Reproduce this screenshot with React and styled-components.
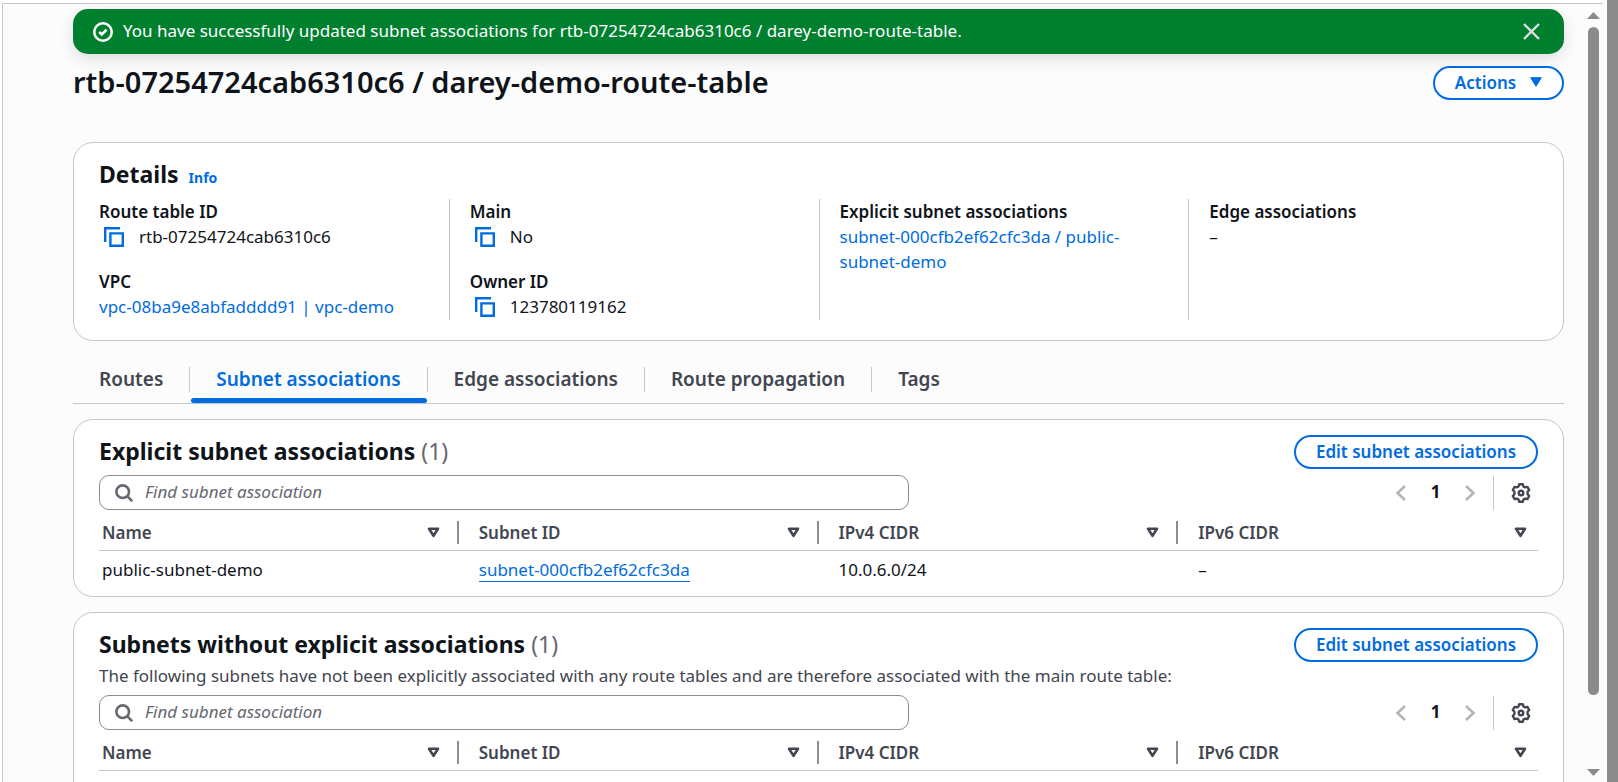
import React from "react";
import styled, { createGlobalStyle } from "styled-components";

const c = {
  text: "#0f141a",
  soft: "#424650",
  muted: "#656871",
  blue: "#006ce0",
  green: "#00802f",
  line: "#c6c6cd",
  edge: "#8c8c94",
  page: "#fcfcfd",
  bar: "#8b8b8b",
};

const Global = createGlobalStyle`
  * { box-sizing: border-box; }
  body {
    margin: 0;
    background: #fff;
    color: ${c.text};
    font: 400 17px/25px "Noto Sans", "Open Sans", sans-serif;
  }
  button, input { font: inherit; color: inherit; }
  h1, h2, p, dl, dd { margin: 0; }
`;

const Shell = styled.div`
  display: flex;
  height: 100vh;
  overflow: hidden;
`;

const Frame = styled.div`
  flex: 1;
  min-width: 0;
  display: flex;
  margin: 3px 4px 0 2px;
  padding-right: 2px;
  background: ${c.page};
  border: solid ${c.line};
  border-width: 1px 0 0 1px;
`;

const Page = styled.main`
  flex: 1;
  min-width: 0;
  padding: 5px 22px 0 70px;
`;

const WindowEdge = styled.div`
  width: 11px;
  background: ${c.bar};
`;

const Scrollbar = styled.div`
  width: 15px;
  display: flex;
  flex-direction: column;
  align-items: center;
  padding: 8px 0 6px;
  gap: 8px;
  svg { display: block; fill: ${c.bar}; }
`;

const Track = styled.div`
  flex: 1;
`;

const Thumb = styled.div`
  width: 11px;
  height: 91%;
  border-radius: 6px;
  background: ${c.bar};
`;

const Banner = styled.div`
  display: flex;
  align-items: center;
  gap: 10px;
  height: 45px;
  padding: 0 24px 0 20px;
  border-radius: 15px;
  background: ${c.green};
  color: #fff;
  box-shadow: 0 5px 15px rgba(0, 7, 22, 0.12);
  p { flex: 1; padding-bottom: 2px; }
  svg { display: block; }
`;

const IconButton = styled.button`
  display: flex;
  align-items: center;
  justify-content: center;
  width: ${(p) => p.$w}px;
  padding: 0;
  border: 0;
  background: none;
  cursor: pointer;
  svg { display: block; }
`;

const Row = styled.div`
  display: flex;
  align-items: center;
  justify-content: space-between;
`;

const TitleRow = styled(Row)`
  height: 34px;
  margin: 12px 0 42px;
`;

const Title = styled.h1`
  font-size: 29px;
  line-height: 34px;
  font-weight: 600;
  padding-bottom: 2px;
`;

const Button = styled.button`
  display: flex;
  align-items: center;
  justify-content: center;
  gap: 14px;
  height: 34px;
  width: ${(p) => p.$w}px;
  padding: 0 0 2px;
  border: 2px solid ${c.blue};
  border-radius: 17px;
  background: #fff;
  color: ${c.blue};
  font-weight: 600;
  white-space: nowrap;
  cursor: pointer;
`;

const Card = styled.section`
  margin-top: 15px;
  padding: 15px 25px ${(p) => p.$bottom || 9}px;
  border: 1px solid ${c.line};
  border-radius: 20px;
  background: #fff;
`;

const CardHeader = styled(Row)`
  align-items: flex-start;
  height: 34px;
`;

const Heading = styled.h2`
  font-size: 23px;
  line-height: 32px;
  font-weight: 700;
  span { font-weight: 400; color: ${c.muted}; }
`;

const DetailsHeading = styled.div`
  display: flex;
  align-items: baseline;
  gap: 10px;
  height: 41px;
`;

const Link = styled.a`
  color: ${c.blue};
  text-decoration: none;
`;

const InfoLink = styled(Link)`
  font-size: 14px;
  font-weight: 700;
`;

const RowLink = styled(Link)`
  border-bottom: 1px solid ${c.blue};
`;

const Columns = styled.dl`
  display: grid;
  grid-template-columns: repeat(4, 1fr);
  gap: 40px;
`;

const Column = styled.div`
  display: flex;
  flex-direction: column;
  gap: 20px;
  padding-bottom: 1px;
  & + & {
    margin-left: -20px;
    padding-left: 20px;
    border-left: 1px solid ${c.line};
  }
  dt { font-weight: 600; }
  dd { min-height: 25px; }
`;

const Copyable = styled.span`
  display: flex;
  align-items: center;
  gap: 15px;
  padding-left: 5px;
`;

const Tabs = styled.nav`
  display: flex;
  margin-top: 16px;
  border-bottom: 1px solid ${c.line};
`;

const Tab = styled.button`
  display: flex;
  flex-direction: column;
  gap: 6px;
  padding: 10px 0 0;
  border: 0;
  background: none;
  color: ${(p) => (p.$active ? c.blue : c.soft)};
  font-size: 19px;
  font-weight: 600;
  cursor: pointer;
  &:not(:last-child) span { border-right: 1px solid ${c.line}; }
  span { padding: 0 26px; line-height: 25px; }
  &::after {
    content: "";
    align-self: stretch;
    height: 5px;
    margin: 0 1px;
    border-radius: 3px;
    background: ${(p) => (p.$active ? c.blue : "transparent")};
  }
`;

const Description = styled.p`
  padding: 1px 0;
  color: ${c.soft};
`;

const Tools = styled(Row)`
  margin-top: 6px;
`;

const Search = styled.label`
  display: flex;
  align-items: center;
  gap: 12px;
  flex: 0 1 810px;
  height: 35px;
  padding: 0 15px;
  border: 1px solid ${c.edge};
  border-radius: 10px;
  background: #fff;
  svg { display: block; flex: none; }
  input {
    flex: 1;
    min-width: 0;
    padding: 0 0 2px;
    border: 0;
    outline: 0;
    background: none;
  }
  input::placeholder { color: ${c.muted}; font-style: italic; opacity: 1; }
`;

const Pager = styled.div`
  display: flex;
  align-items: center;
  height: 35px;
  padding-right: 7px;
  gap: 17px;
`;

const PageNumber = styled.span`
  width: 59px;
  padding-bottom: 2px;
  text-align: center;
  font-weight: 700;
`;

const Pages = styled.div`
  display: flex;
  align-items: center;
`;

const Rule = styled.div`
  width: 1px;
  height: 34px;
  background: ${c.line};
`;

const Table = styled.table`
  width: 100%;
  table-layout: fixed;
  border-collapse: collapse;
  text-align: left;
  th {
    padding: 11px 0 6px;
    border-bottom: 1px solid ${c.line};
    color: ${c.soft};
    font-weight: 600;
  }
  td { padding: 6px 0 5px 20px; }
  td:first-child { padding-left: 3px; }
`;

const HeaderCell = styled.div`
  display: flex;
  align-items: center;
  justify-content: space-between;
  height: 23px;
  padding: 0 ${(p) => (p.$last ? 9 : 17)}px 0 ${(p) => (p.$first ? 3 : 20)}px;
  border-right: 2px solid ${(p) => (p.$last ? "transparent" : c.edge)};
`;

const CopyIcon = () => (
  <svg width="20" height="20" viewBox="0 0 20 20" fill="none" stroke={c.blue} strokeWidth="2.4">
    <path d="M1.2 15V1.2H16" />
    <path d="M6.4 6.4h12.4v12.4H6.4z" />
  </svg>
);
const CheckIcon = () => (
  <svg width="20" height="20" viewBox="0 0 16 16" fill="none" stroke="#fff" strokeWidth="2">
    <circle cx="8" cy="8" r="7" />
    <path d="m5 8 2 2 3.9-3.8" />
  </svg>
);
const CloseIcon = () => (
  <svg width="17" height="17" viewBox="0 0 17 17" fill="none" stroke="#dedee3" strokeWidth="2.4">
    <path d="m1 1 15 15M16 1 1 16" />
  </svg>
);
const SearchIcon = () => (
  <svg width="18" height="18" viewBox="0 0 18 18" fill="none" stroke={c.muted} strokeWidth="2.6">
    <circle cx="7.7" cy="7.7" r="6.3" />
    <path d="m12.2 12.2 5 5" />
  </svg>
);
const CaretIcon = () => (
  <svg width="12" height="10" viewBox="0 0 12 10" fill={c.blue} stroke={c.blue} strokeLinejoin="round">
    <path d="M.7.7h10.6L6 9.3z" />
  </svg>
);
const SortIcon = () => (
  <svg width="13" height="11" viewBox="0 0 13 11" fill="none" stroke={c.soft} strokeWidth="2.6" strokeLinejoin="round">
    <path d="M2 1.8h9L6.5 8.8z" />
  </svg>
);
const ChevronIcon = ({ right }) => (
  <svg width="11" height="16" viewBox="0 0 11 16" fill="none" stroke="#b4b4bb" strokeWidth="2.6">
    <path d={right ? "m1 1 7.5 7L1 15" : "M10 1 2.5 8l7.5 7"} />
  </svg>
);
const GearIcon = () => (
  <svg width="20" height="20" viewBox="0 0 20 20" fill="none" stroke={c.soft} strokeWidth="2.4" strokeLinejoin="round">
    <path d="M8.2 1.3h3.6l.7 2.2 1.6.9 2.3-.5 1.8 3.1-1.6 1.7v2.6l1.6 1.7-1.8 3.1-2.3-.5-1.6.9-.7 2.2H8.2l-.7-2.2-1.6-.9-2.3.5L1.8 13l1.6-1.7V8.7L1.8 7l1.8-3.1 2.3.5 1.6-.9z" />
    <circle cx="10" cy="10" r="2.3" />
  </svg>
);

const Field = ({ label, children }) => (
  <div>
    <dt>{label}</dt>
    <dd>{children}</dd>
  </div>
);

const Copy = ({ children }) => (
  <Copyable>
    <IconButton aria-label="Copy" $w={20}><CopyIcon /></IconButton>
    {children}
  </Copyable>
);

const headers = ["Name", "Subnet ID", "IPv4 CIDR", "IPv6 CIDR"];

const SubnetCard = ({ title, description, row }) => (
  <Card>
    <CardHeader>
      <Heading>{title} <span>(1)</span></Heading>
      <Button $w={244}>Edit subnet associations</Button>
    </CardHeader>
    {description && <Description>{description}</Description>}
    <Tools>
      <Search>
        <SearchIcon />
        <input type="search" aria-label="Find subnet association" placeholder="Find subnet association" />
      </Search>
      <Pager>
        <Pages>
          <IconButton aria-label="Previous page" disabled $w={11}><ChevronIcon /></IconButton>
          <PageNumber>1</PageNumber>
          <IconButton aria-label="Next page" disabled $w={11}><ChevronIcon right /></IconButton>
        </Pages>
        <Rule />
        <IconButton aria-label="Preferences" $w={20}><GearIcon /></IconButton>
      </Pager>
    </Tools>
    <Table>
      <thead>
        <tr>
          {headers.map((h, i) => (
            <th key={h} scope="col">
              <HeaderCell $first={i === 0} $last={i === 3}>
                {h}
                <IconButton aria-label={"Sort by " + h} $w={13}><SortIcon /></IconButton>
              </HeaderCell>
            </th>
          ))}
        </tr>
      </thead>
      <tbody>
        <tr>
          <td>{row.name}</td>
          <td><RowLink href="#subnet">{row.id}</RowLink></td>
          <td>{row.v4}</td>
          <td>–</td>
        </tr>
      </tbody>
    </Table>
  </Card>
);

export default function App() {
  return (
    <>
      <Global />
      <Shell>
        <Frame>
          <Page>
            <Banner role="status">
              <CheckIcon />
              <p>You have successfully updated subnet associations for rtb-07254724cab6310c6 / darey-demo-route-table.</p>
              <IconButton aria-label="Dismiss" $w={17}><CloseIcon /></IconButton>
            </Banner>
            <TitleRow>
              <Title>rtb-07254724cab6310c6 / darey-demo-route-table</Title>
              <Button $w={131}>Actions <CaretIcon /></Button>
            </TitleRow>
            <Card $bottom={20}>
              <DetailsHeading>
                <Heading>Details</Heading>
                <InfoLink href="#info">Info</InfoLink>
              </DetailsHeading>
              <Columns>
                <Column>
                  <Field label="Route table ID"><Copy>rtb-07254724cab6310c6</Copy></Field>
                  <Field label="VPC"><Link href="#vpc">vpc-08ba9e8abfadddd91 | vpc-demo</Link></Field>
                </Column>
                <Column>
                  <Field label="Main"><Copy>No</Copy></Field>
                  <Field label="Owner ID"><Copy>123780119162</Copy></Field>
                </Column>
                <Column>
                  <Field label="Explicit subnet associations">
                    <Link href="#subnet">subnet-000cfb2ef62cfc3da / public-subnet-demo</Link>
                  </Field>
                </Column>
                <Column>
                  <Field label="Edge associations">–</Field>
                </Column>
              </Columns>
            </Card>
            <Tabs aria-label="Route table sections">
              <Tab><span>Routes</span></Tab>
              <Tab $active aria-current="page"><span>Subnet associations</span></Tab>
              <Tab><span>Edge associations</span></Tab>
              <Tab><span>Route propagation</span></Tab>
              <Tab><span>Tags</span></Tab>
            </Tabs>
            <SubnetCard
              title="Explicit subnet associations"
              row={{ name: "public-subnet-demo", id: "subnet-000cfb2ef62cfc3da", v4: "10.0.6.0/24" }}
            />
            <SubnetCard
              title="Subnets without explicit associations"
              description="The following subnets have not been explicitly associated with any route tables and are therefore associated with the main route table:"
              row={{ name: "private-subnet-demo", id: "subnet-0ac39e5f7a2c16d4e", v4: "10.0.5.0/24" }}
            />
          </Page>
          <Scrollbar aria-hidden="true">
            <svg width="13" height="7" viewBox="0 0 13 7"><path d="M6.5 0 13 7H0z" /></svg>
            <Track><Thumb /></Track>
            <svg width="13" height="7" viewBox="0 0 13 7"><path d="M0 0h13L6.5 7z" /></svg>
          </Scrollbar>
        </Frame>
        <WindowEdge />
      </Shell>
    </>
  );
}
